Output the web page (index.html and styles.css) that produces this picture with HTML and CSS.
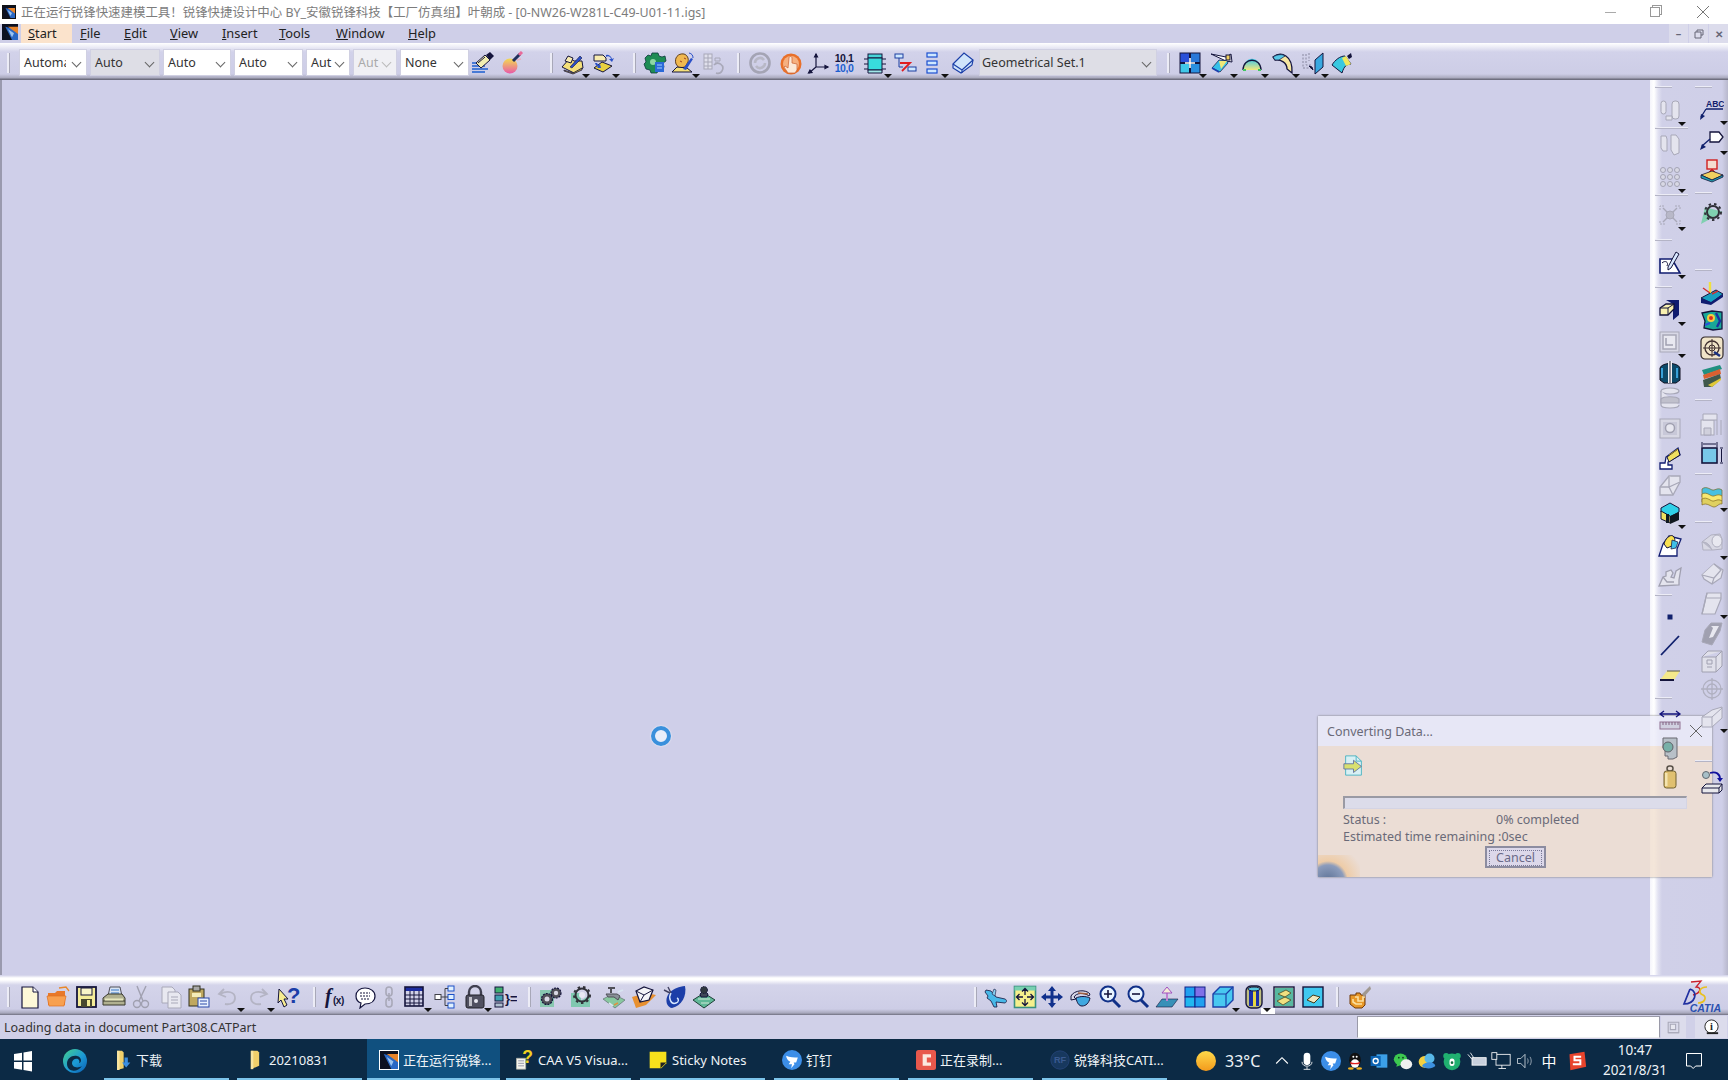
FILE: index.html
```html
<!DOCTYPE html>
<html lang="zh">
<head>
<meta charset="utf-8">
<title>CATIA</title>
<link rel="stylesheet" href="styles.css">
</head>
<body>
<svg class="sprite" xmlns="http://www.w3.org/2000/svg">
<defs>
<linearGradient id="gSun" x1="0" y1="0" x2="0" y2="1"><stop offset="0" stop-color="#ffd94a"/><stop offset="1" stop-color="#f39a1c"/></linearGradient>
<linearGradient id="gEdge" x1="0" y1="0" x2="1" y2="1"><stop offset="0" stop-color="#45d08c"/><stop offset=".55" stop-color="#1c9ad6"/><stop offset="1" stop-color="#0a5bb0"/></linearGradient>
<linearGradient id="gBall" x1="0" y1="0" x2="0" y2="1"><stop offset="0" stop-color="#f2dc50"/><stop offset="1" stop-color="#e85aa8"/></linearGradient>
<linearGradient id="gCyan" x1="0" y1="0" x2="0" y2="1"><stop offset="0" stop-color="#38c8ee"/><stop offset="1" stop-color="#f5e87a"/></linearGradient>

<!-- top toolbar -->
<symbol id="i-brush" viewBox="0 0 24 24"><path d="M1 12h10M1 15h13M1 18h16M1 21h13" stroke="#1c5fd0" stroke-width="1.6" fill="none"/><path d="M5 12l9-8 5 5-9 8z" fill="#f2eeb0" stroke="#14143c"/><path d="M15 4l4-3 4 4-4 4z" fill="#14143c"/><path d="M7 12l7-6" stroke="#14143c"/></symbol>
<symbol id="i-ball" viewBox="0 0 24 24"><circle cx="10" cy="15" r="7.5" fill="url(#gBall)"/><path d="M13 10L20 3" stroke="#20305c" stroke-width="3"/><path d="M19 4l3-3" stroke="#e86a9a" stroke-width="3"/><path d="M17 9l4-1" stroke="#e8b0c0" stroke-width="1.5"/></symbol>
<symbol id="i-sk1" viewBox="0 0 24 24"><path d="M1 16l8-9 4 3 8 0 1 7-9 5z" fill="#f4e07a" stroke="#14143c"/><path d="M4 10l3-5 5 2-2 5z" fill="#f8ecb0" stroke="#14143c"/><path d="M9 16L19 5l2 2-10 10z" fill="#2a50c8" stroke="#14143c" stroke-width=".6"/><path d="M3 19l9 3 9-5v2l-9 4-9-3z" fill="#b8a040" stroke="#14143c" stroke-width=".7"/></symbol>
<symbol id="i-sk2" viewBox="0 0 24 24"><path d="M3 4h9l3 3v3H3z" fill="#f8ecb0" stroke="#14143c"/><path d="M15 4a5 5 0 0 1 6 4l2-1-2 4-3-3 2 0a3 3 0 0 0-5-2z" fill="#2a50c8"/><path d="M3 17l8-6 10 4-9 6z" fill="#e8d040" stroke="#14143c"/><path d="M4 12a5 5 0 0 0 3 4l-1 1 4 0-1-4-1 1a3 3 0 0 1-2-2z" fill="#2a50c8"/></symbol>
<symbol id="i-gearg" viewBox="0 0 24 24"><path d="M9 2h6l1 3 3 1 3-1 1 5-3 2 1 4-2 3-3-1-2 4h-6l-1-3-4-1-2-5 2-2-1-4 3-3 3 1z" fill="#1e8c54" stroke="#0e3a3c" stroke-width=".8"/><circle cx="10" cy="11" r="3" fill="#8fd8a4"/><rect x="12" y="11" width="9" height="10" fill="#2a6ad8"/><path d="M14 14h5M14 17h5" stroke="#a0d0ff"/></symbol>
<symbol id="i-face" viewBox="0 0 24 24"><path d="M5 13c-2-6 2-11 8-10 3 1 5 4 4 8l-3 5-6 1z" fill="#f0b850" stroke="#604020"/><path d="M9 10l2 1M13 7l2 1" stroke="#a04020"/><path d="M1 21l5-5 10 1 5 4z" fill="#f4e07a" stroke="#14143c"/><path d="M12 18L20 7l2 1-7 11z" fill="#2a50c8"/><path d="M18 2a5 5 0 0 1 4 5" stroke="#2a50c8" fill="none"/></symbol>
<symbol id="i-tabled" viewBox="0 0 24 24" fill="none" stroke="#a8a8b8"><rect x="3" y="3" width="8" height="15" fill="#e0e0ec"/><path d="M3 7h8M3 11h8M3 15h8M7 3v15"/><path d="M14 7h5v3h-5zM14 12h3"/><path d="M15 22a5 5 0 1 0-2-8" stroke-width="1.6"/></symbol>
<symbol id="i-swirl" viewBox="0 0 24 24" fill="none" stroke="#a4a4b4" stroke-width="2.6"><circle cx="12" cy="12" r="9.5"/><path d="M7 12a5 5 0 0 1 9-3M17 12a5 5 0 0 1-9 3" stroke="#b8b8c6"/></symbol>
<symbol id="i-hand" viewBox="0 0 24 24"><circle cx="12" cy="13" r="10.5" fill="#e8702a"/><circle cx="12" cy="13" r="8" fill="#f6b080"/><path d="M10 7c0-2 3-2 3 0v5l5 1v6l-2 3H9l-4-6 1-1 3 2z" fill="#fbe8d8" stroke="#c86030" stroke-width=".7"/></symbol>
<symbol id="i-axis" viewBox="0 0 24 24" fill="none" stroke="#14143c" stroke-width="1.2"><path d="M10 3v13l12 0M10 16L3 22"/><path d="M8.500 6L10 3l1.500 3zM19 14.500l3 1.500-3 1.500zM4 19l-1.500 3 3.500-.5z" fill="#14143c"/></symbol>
<symbol id="i-num" viewBox="0 0 24 24"><text x="12" y="10.500" class="numt" fill="#14143c">10,1</text><text x="12" y="21" class="numt" fill="#1c5fd0">10,0</text></symbol>
<symbol id="i-cube" viewBox="0 0 24 24"><rect x="5" y="3" width="14" height="4" fill="#48d4d8" stroke="#14143c"/><rect x="5" y="7" width="14" height="12" fill="#38dcdc" stroke="#14143c"/><path d="M5 19l14 0v3H5z" fill="#a0e8e8" stroke="#14143c"/><path d="M1 8h4M1 13h4M1 18h4M19 8h4M19 13h4M19 18h4" stroke="#14143c"/></symbol>
<symbol id="i-skr" viewBox="0 0 24 24"><rect x="2" y="3" width="8" height="4" fill="#cfe8ff" stroke="#1c3fa0"/><path d="M6 7v9h4" stroke="#1c3fa0" fill="none"/><rect x="15" y="16" width="8" height="4" fill="#cfe8ff" stroke="#1c3fa0"/><path d="M7 12h10l-8 8" stroke="#e01c20" stroke-width="1.800" fill="none"/></symbol>
<symbol id="i-list" viewBox="0 0 24 24" fill="#cfe8ff" stroke="#1c4fd0" stroke-width="1.2"><rect x="7" y="2" width="10" height="4"/><rect x="7" y="10" width="10" height="4"/><rect x="7" y="18" width="10" height="4"/></symbol>
<symbol id="i-plane" viewBox="0 0 24 24"><path d="M2 13L13 2l9 7-1 5-11 8-8-5z" fill="#cfe4fb" stroke="#1a3ea8" stroke-width="1.200"/><path d="M2 13l9 6L22 9M11 19v3" stroke="#1a3ea8" fill="none" stroke-width="1.200"/></symbol>
<symbol id="i-grid4" viewBox="0 0 24 24"><rect x="2" y="2" width="9.500" height="9.500" fill="#2a50d8" stroke="#14143c"/><rect x="12.500" y="2" width="9.500" height="9.500" fill="#2a78d8" stroke="#14143c"/><rect x="2" y="12.500" width="9.500" height="9.500" fill="#40c8e8" stroke="#14143c"/><rect x="12.500" y="12.500" width="9.500" height="9.500" fill="#2a90e0" stroke="#14143c"/><path d="M12 7v10M7 12h10" stroke="#fff" stroke-width="1.600"/></symbol>
<symbol id="i-surf1" viewBox="0 0 24 24"><path d="M2 3l15 3 5-3 1 8-6-1z" fill="#fff" stroke="#14143c"/><rect x="17" y="4" width="4" height="5" fill="#f0d060" stroke="#14143c"/><path d="M3 17l7-8 8 1 1 2-8 9z" fill="#38c0e8" stroke="#14143c" stroke-width=".7"/><path d="M10 10l8 0-6 8z" fill="#f0e878"/><path d="M3 17l7 4" stroke="#1c40b0" stroke-width="1.500"/></symbol>
<symbol id="i-arc" viewBox="0 0 24 24"><path d="M3 19c0-15 18-15 18 0z" fill="url(#gCyan)"/><path d="M3 19C3 6 21 6 21 19" stroke="#14143c" fill="none" stroke-width="1.300"/><path d="M3 19h3M18 19h3" stroke="#40c860" stroke-width="2"/></symbol>
<symbol id="i-cres" viewBox="0 0 24 24"><path d="M2 6C10 0 22 4 21 22L16 18C16 12 10 8 4 9z" fill="#f6e6a0" stroke="#14143c" stroke-width="1.300"/><path d="M2 6c5-3 9-3 12-1l-6 4-4 0z" fill="#58c8e8" stroke="#14143c" stroke-width=".7"/></symbol>
<symbol id="i-proj" viewBox="0 0 24 24"><path d="M15 9l8-7v14l-8 7z" fill="#38a8e0" stroke="#14143c"/><path d="M3 3v14h8" stroke="#8888a0" stroke-dasharray="2 1.500" fill="none"/><path d="M6 3v11h6M9 2v8" stroke="#8888a0" stroke-dasharray="2 1.500" fill="none"/><path d="M9 15l4 4-1-3-3-1z" fill="#14143c" stroke="#14143c"/></symbol>
<symbol id="i-surf2" viewBox="0 0 24 24"><path d="M2 14C5 9 10 5 15 5l6 8c-4 0-7 2-9 9z" fill="#38c8e0" stroke="#14143c"/><path d="M12 7l4-2 5 8-5 2z" fill="#f0e860"/><path d="M17 5l4-3 1 4-3 2z" fill="#14143c"/></symbol>

<!-- bottom toolbar -->
<symbol id="i-new" viewBox="0 0 24 24"><path d="M4 2h11l5 5v16H4z" fill="#fdf8d8" stroke="#14143c" stroke-width="1.200"/><path d="M15 2v5h5" fill="#fff" stroke="#14143c"/></symbol>
<symbol id="i-open" viewBox="0 0 24 24"><path d="M2 8h7l2-2h8v14H2z" fill="#e8782a"/><path d="M1 11h19l-2 10H3z" fill="#f8a050" stroke="#e07020" stroke-width=".7"/><path d="M13 3l7-1 3 4" fill="none" stroke="#e8882a" stroke-width="1.300"/></symbol>
<symbol id="i-save" viewBox="0 0 24 24"><rect x="3" y="2" width="19" height="20" fill="#f4ec98" stroke="#14143c" stroke-width="1.800"/><rect x="7" y="3" width="11" height="7" fill="#f8f4c8" stroke="#14143c"/><rect x="7" y="14" width="11" height="8" fill="#484830"/><rect x="13" y="15" width="3" height="6" fill="#f4ec98"/></symbol>
<symbol id="i-print" viewBox="0 0 24 24"><path d="M8 2h10l2 9H6z" fill="#d8e4f4" stroke="#505058"/><path d="M9 5h8M9 8h8" stroke="#3878c8"/><path d="M1 13l5-4h14l3 4v7H1z" fill="#b0b090" stroke="#38382c"/><path d="M1 16h22" stroke="#38382c"/><rect x="3" y="13.500" width="18" height="2" fill="#e8e8c0"/></symbol>
<symbol id="i-cut" viewBox="0 0 24 24" fill="none" stroke="#a0a0b0" stroke-width="1.400"><path d="M8 1l6 15M17 1l-7 15"/><circle cx="8" cy="19" r="3.500"/><circle cx="16" cy="19" r="3.500"/></symbol>
<symbol id="i-copy" viewBox="0 0 24 24" fill="#e8e8f0" stroke="#a8a8b8"><path d="M3 2h10l3 3v13H3z"/><path d="M9 7h10l3 3v13H9z"/><path d="M12 12h7M12 15h7M12 18h7"/></symbol>
<symbol id="i-paste" viewBox="0 0 24 24"><rect x="2" y="4" width="15" height="17" fill="#c0a860" stroke="#303020"/><rect x="6" y="1" width="7" height="5" fill="#a8a8a8" stroke="#303020"/><path d="M5 8h9v4H5z" fill="#f4ecb8"/><rect x="11" y="13" width="11" height="9" fill="#e8f0ff" stroke="#2848a8"/><path d="M13 16h7M13 19h7" stroke="#2848a8"/></symbol>
<symbol id="i-undo" viewBox="0 0 24 24" fill="none" stroke="#b4b4c4" stroke-width="1.800"><path d="M8 4L3 9l7 3M4 9c8-4 15-2 15 4 0 5-5 7-10 6"/></symbol>
<symbol id="i-redo" viewBox="0 0 24 24" fill="none" stroke="#b4b4c4" stroke-width="1.800"><path d="M16 4l5 5-7 3M20 9C12 5 5 7 5 13c0 5 5 7 10 6"/></symbol>
<symbol id="i-help" viewBox="0 0 24 24"><path d="M2 4l9 10-4 0 3 6-3 2-3-7-3 3z" fill="#f6ec90" stroke="#14143c"/><text x="10" y="18" class="helpt" fill="#1c3ea8">?</text></symbol>
<symbol id="i-fx" viewBox="0 0 24 24"><text x="1" y="18" class="fxt" fill="#14143c">f</text><text x="9" y="19" class="fxs" fill="#14143c">(x)</text></symbol>
<symbol id="i-chat" viewBox="0 0 24 24"><path d="M3 11C3 6 7 3 12 3s10 3 10 8-4 8-10 8l-5 4 1-5c-3-1-5-4-5-7z" fill="#fff" stroke="#14143c" stroke-width="1.200"/><path d="M7 8h10M7 11h10M8 14h8" stroke="#14143c" stroke-dasharray="2 1"/></symbol>
<symbol id="i-link" viewBox="0 0 24 24" fill="none" stroke="#a8a8b8" stroke-width="1.600"><rect x="9" y="2" width="6" height="9" rx="3"/><rect x="9" y="13" width="6" height="9" rx="3"/><path d="M12 8v8"/></symbol>
<symbol id="i-table" viewBox="0 0 24 24"><rect x="2" y="2" width="18" height="4" fill="#1c2ca0"/><rect x="2" y="2" width="18" height="19" fill="none" stroke="#14143c" stroke-width="1.600"/><path d="M2 10h18M2 14h18M2 18h18M7 6v15M11 6v15M16 6v15" stroke="#14143c"/></symbol>
<symbol id="i-tree" viewBox="0 0 24 24" fill="#dff0ff" stroke="#1c50c8"><rect x="15" y="1" width="6" height="5"/><rect x="15" y="9.500" width="6" height="5"/><rect x="15" y="18" width="6" height="5"/><rect x="2" y="9.500" width="6" height="5" stroke="#404048" fill="#fff"/><path d="M8 12h7M12 12V3.500h3M12 12v8.500h3" fill="none" stroke="#404048"/></symbol>
<symbol id="i-lock" viewBox="0 0 24 24"><path d="M6 11V7a6 6 0 0 1 12 0v4" fill="none" stroke="#404050" stroke-width="2.400"/><rect x="3" y="10" width="18" height="13" rx="2" fill="#505060" stroke="#202028"/><path d="M6 12h3v9H6z" fill="#c0c0c8"/><circle cx="13" cy="16" r="2" fill="#e8e8f0"/></symbol>
<symbol id="i-par" viewBox="0 0 24 24"><rect x="2" y="2" width="8" height="6" fill="#40b070" stroke="#14143c"/><rect x="2" y="10" width="8" height="6" fill="#40a0b0" stroke="#14143c"/><rect x="2" y="18" width="8" height="4" fill="#b0c0d0" stroke="#14143c"/><text x="12" y="18" class="part" fill="#14143c">}=</text></symbol>
<symbol id="i-gears" viewBox="0 0 24 24"><rect x="1" y="5" width="14" height="17" fill="#88c8b0"/><circle cx="8" cy="14" r="5.500" fill="#505058" stroke="#14143c" stroke-width="1.200" stroke-dasharray="2 1"/><circle cx="8" cy="14" r="2.500" fill="#d8d8e4"/><circle cx="17" cy="8" r="5" fill="#505058" stroke="#14143c" stroke-width="1.200" stroke-dasharray="2 1"/><circle cx="17" cy="8" r="2.200" fill="#d8d8e4"/></symbol>
<symbol id="i-gear" viewBox="0 0 24 24"><path d="M1 22L20 22 20 10z" fill="#80c8b0"/><path d="M1 8h10v14H1z" fill="#80c8b0"/><circle cx="12" cy="10" r="6.500" fill="none" stroke="#303038" stroke-width="2"/><circle cx="12" cy="10" r="8" fill="none" stroke="#303038" stroke-width="2" stroke-dasharray="2.500 3"/><circle cx="12" cy="10" r="3" fill="#e8e8f4"/></symbol>
<symbol id="i-tap" viewBox="0 0 24 24"><path d="M1 14l10-5 12 6-10 8z" fill="#88c8a0" stroke="#607070" stroke-width=".7"/><path d="M4 9h11l3 2-2 4-4-3H6z" fill="#8a9098" stroke="#505058"/><path d="M9 8V3M6 3h7" stroke="#505058" stroke-width="2"/><path d="M16 7l5-2M7 18l4 3" stroke="#d8e4f0" stroke-width="1.600"/><path d="M12 20l4-2" stroke="#e09040" stroke-width="1.400"/></symbol>
<symbol id="i-book" viewBox="0 0 24 24"><path d="M0 12l4 11 10-3 10-10-10-2z" fill="#e89030"/><path d="M4 6l8-4 9 3-4 10-9 2z" fill="#f4f4f8" stroke="#14143c" stroke-width="1.200"/><path d="M4 6l8 4 9-5M12 10l-4 7" fill="none" stroke="#14143c"/></symbol>
<symbol id="i-stet" viewBox="0 0 24 24"><path d="M4 19C1 10 10 2 22 1c2 9-3 20-13 22-2 0-4-2-5-4z" fill="#1c3ea8"/><path d="M1 5l6 3M5 2l3 6" stroke="#404060" stroke-width="1.400"/><path d="M8 8c-3 5 0 12 5 10 3-1 3-4 1-5" fill="none" stroke="#d8e8ff" stroke-width="1.400"/></symbol>
<symbol id="i-wb" viewBox="0 0 24 24"><path d="M1 15L12 8l11 7-11 8z" fill="#60b898" stroke="#204038"/><path d="M6 14h12M9 18h8" stroke="#d0e8d8"/><path d="M8 9a5 5 0 0 1 8 0l-1 3H9z" fill="#404858" stroke="#14143c"/><circle cx="12" cy="5" r="3.500" fill="#303840" stroke="#14143c" stroke-dasharray="1.500 1"/></symbol>
<symbol id="i-air" viewBox="0 0 24 24"><path d="M2 5l5 1 5 6 9 2c2 1 2 3 0 4l-9-1 1 5-3 0-3-6-4-3 1-2-3-4z" fill="#48b8e8" stroke="#14143c" stroke-width=".8"/><path d="M8 9l2-5 2 1-1 6z" fill="#88d0f0" stroke="#14143c" stroke-width=".6"/></symbol>
<symbol id="i-fit" viewBox="0 0 24 24"><rect x="1.500" y="1.500" width="21" height="21" fill="#f6f08c" stroke="#3a9080" stroke-width="1.600"/><rect x="1.500" y="1.500" width="21" height="4" fill="#78d0b0"/><path d="M12 4v6M9 6.500l3-3 3 3M12 20v-6M9 17.500l3 3 3-3M4 12h6M6.500 9l-3 3 3 3M20 12h-6M17.500 9l3 3-3 3" stroke="#14143c" fill="none" stroke-width="1.300"/></symbol>
<symbol id="i-pan" viewBox="0 0 24 24"><path d="M12 1l4 5h-2.500v4.500H18V8l5 4-5 4v-2.500h-4.500V18H16l-4 5-4-5h2.500v-4.500H6V16l-5-4 5-4v2.500h4.500V6H8z" fill="#10308c"/></symbol>
<symbol id="i-rot" viewBox="0 0 24 24"><path d="M2 11c3-6 15-7 19-2l-1 2C15 7 7 8 5 12l2 2-5 1z" fill="#d8d8e8" stroke="#14143c"/><path d="M7 13c4-2 10-2 14 0-1 5-4 8-8 8-3 0-5-3-6-8z" fill="#40a8e0" stroke="#14143c"/><path d="M9 8l10 1" stroke="#a06040" stroke-width="1.500"/></symbol>
<symbol id="i-zin" viewBox="0 0 24 24" fill="none"><circle cx="10" cy="9" r="7.500" fill="#e8f4ff" stroke="#103088" stroke-width="2"/><path d="M6 9h8M10 5v8" stroke="#14143c" stroke-width="1.600"/><path d="M15 15l7 7" stroke="#103088" stroke-width="3"/></symbol>
<symbol id="i-zout" viewBox="0 0 24 24" fill="none"><circle cx="10" cy="9" r="7.500" fill="#e8f4ff" stroke="#103088" stroke-width="2"/><path d="M6 9h8" stroke="#14143c" stroke-width="1.600"/><path d="M15 15l7 7" stroke="#103088" stroke-width="3"/></symbol>
<symbol id="i-normal" viewBox="0 0 24 24"><path d="M1 22l6-8h16l-6 8z" fill="#3890b8" stroke="#14143c" stroke-width=".6"/><path d="M12 16V5" stroke="#c080d0" stroke-width="2"/><path d="M7 8l5-6 5 6z" fill="#f4ecd8" stroke="#a050c0"/></symbol>
<symbol id="i-views" viewBox="0 0 24 24"><rect x="2" y="2" width="10" height="10" fill="#20a0f0" stroke="#102088"/><rect x="12" y="2" width="10" height="10" fill="#8070e8" stroke="#102088"/><rect x="2" y="12" width="10" height="10" fill="#20b8f0" stroke="#102088"/><rect x="12" y="12" width="10" height="10" fill="#20a0f0" stroke="#102088"/></symbol>
<symbol id="i-box" viewBox="0 0 24 24"><path d="M2 9L9 2h13v13l-7 7H2z" fill="#48c8f0" stroke="#1c40a8" stroke-width="1.400"/><path d="M2 9h13v13M15 9l7-7" fill="none" stroke="#1c40a8" stroke-width="1.200"/></symbol>
<symbol id="i-cyl" viewBox="0 0 24 24"><rect x="4" y="1" width="16" height="22" rx="5" fill="#c0c080" stroke="#14143c" stroke-width="1.400"/><rect x="7" y="5" width="10" height="16" fill="#1c30a8"/><rect x="11" y="5" width="3" height="16" fill="#e8d840"/><ellipse cx="12" cy="4" rx="6" ry="2" fill="#58c8e0" stroke="#14143c"/></symbol>
<symbol id="i-shot1" viewBox="0 0 24 24"><rect x="2" y="2" width="20" height="20" fill="#f0f0d8" stroke="#14143c" stroke-width="1.400"/><rect x="3" y="3" width="18" height="18" fill="#58b8a0"/><path d="M6 9l8-4 5 3-6 4zM5 16l8-4 6 3-8 5z" fill="#f0e080" stroke="#403818" stroke-width=".7"/></symbol>
<symbol id="i-shot2" viewBox="0 0 24 24"><rect x="2" y="2" width="20" height="20" fill="#40c8f0" stroke="#14143c" stroke-width="1.400"/><path d="M6 15l6-5 7 2-6 6z" fill="#f0e8c0" stroke="#403818"/></symbol>
<symbol id="i-ctl" viewBox="0 0 24 24"><path d="M2 10h6v-2h4l1 2h4v10l-3 3H7l-5-4z" fill="#e89828" stroke="#703808"/><path d="M7 12h3v4h5v-4h2M5 14v3l3 2h6" fill="none" stroke="#fbe0a0" stroke-width="1.600"/><path d="M14 9l8-8 1 3-7 8z" fill="#a09890"/></symbol>

<!-- right bar, column 1 -->
<symbol id="i-d1" viewBox="0 0 24 24" fill="#e4e4ee" stroke="#a8a8b8"><rect x="3" y="3" width="5" height="13" rx="2.500"/><rect x="14" y="3" width="7" height="18" rx="3"/><path d="M8 18h6v4H8z"/></symbol>
<symbol id="i-d2" viewBox="0 0 24 24" fill="#e4e4ee" stroke="#a8a8b8"><path d="M3 3h5l1 3v12H5L3 15z"/><path d="M13 2h5l3 4v14l-5 2-3-5z"/></symbol>
<symbol id="i-d3" viewBox="0 0 24 24" fill="#d8d8e4" stroke="#a4a4b4"><circle cx="5" cy="5" r="2.500"/><circle cx="12" cy="5" r="2.500"/><circle cx="19" cy="5" r="2.500"/><circle cx="5" cy="12" r="2.500"/><circle cx="12" cy="12" r="2.500"/><circle cx="19" cy="12" r="2.500"/><circle cx="5" cy="19" r="2.500"/><circle cx="12" cy="19" r="2.500"/><circle cx="19" cy="19" r="2.500"/></symbol>
<symbol id="i-d4" viewBox="0 0 24 24" fill="none" stroke="#a8a8b8"><path d="M2 7V3h5M17 3h5v4M22 17v4h-5M7 21H2v-4" stroke-dasharray="2 1"/><path d="M5 5l14 14M19 5L5 19" stroke-width="1.400"/><circle cx="12" cy="12" r="4" fill="#b8b8c8"/></symbol>
<symbol id="i-sketch" viewBox="0 0 24 24"><path d="M2 8h12l8 14H2z" fill="#fff" stroke="#101c70" stroke-width="1.600"/><path d="M10 16L18 1l3 2-8 14-3 2z" fill="#d8e8ff" stroke="#14143c"/><path d="M4 12c3-3 7-1 5 3" fill="none" stroke="#14143c"/></symbol>
<symbol id="i-pad" viewBox="0 0 24 24"><path d="M8 2h13v15l-6 5V6z" fill="#101c70"/><path d="M2 10l6-4h8v5l-6 6H2z" fill="#f8f0b0" stroke="#14143c" stroke-width="1.300"/><path d="M2 10h8l6-4M10 10v7" fill="none" stroke="#14143c"/></symbol>
<symbol id="i-d5" viewBox="0 0 24 24"><rect x="2" y="2" width="19" height="20" fill="#d8d8e6" stroke="#a8a8b8"/><rect x="5" y="5" width="13" height="14" fill="#e8e8f0" stroke="#a8a8b8" stroke-width="1.500"/><path d="M8 8v7h7" fill="none" stroke="#a0a0b0" stroke-width="1.500"/></symbol>
<symbol id="i-coil" viewBox="0 0 24 24"><path d="M2 8c2-6 18-6 20 0v12l-4 3H6l-4-3z" fill="#0c4868" stroke="#101020"/><rect x="10" y="1" width="4" height="22" fill="#f0f0f4"/><path d="M4 8v10M19 8v10" stroke="#38a0d8" stroke-width="2"/><path d="M12 1v22" stroke="#202030"/></symbol>
<symbol id="i-d6" viewBox="0 0 24 24" fill="#e4e4ee" stroke="#a8a8b8" stroke-width="1.200"><ellipse cx="12" cy="5" rx="9" ry="3"/><path d="M3 5v14c0 2 4 3 9 3s9-1 9-3"/><path d="M3 13c3-3 15-3 18 0v4H3z" fill="#c0c0cc"/></symbol>
<symbol id="i-d7" viewBox="0 0 24 24"><rect x="2" y="3" width="20" height="19" fill="#d8d8e4" stroke="#a8a8b8"/><rect x="5" y="6" width="14" height="13" fill="#c8c8d8"/><circle cx="12" cy="12" r="4.500" fill="#e8e8f0" stroke="#a0a0b0" stroke-width="1.500"/></symbol>
<symbol id="i-rib" viewBox="0 0 24 24"><path d="M2 23v-6h5l1-6 12-9 2 7-12 7v3h4v4z" fill="#fff" stroke="#101c70" stroke-width="1.300"/><path d="M9 11l11-8 2 6-11 7z" fill="#f0e060" stroke="#14143c"/><path d="M11 9l9-6" stroke="#a89020"/></symbol>
<symbol id="i-d8" viewBox="0 0 24 24" fill="#e4e4ee" stroke="#a8a8b8" stroke-width="1.300"><path d="M2 22v-8l9-11h11v6L15 22z"/><path d="M2 14h9l4 8M11 3l0 11 11-5"/></symbol>
<symbol id="i-hexc" viewBox="0 0 24 24"><path d="M12 2l9 5v4l-9 5-9-5V7z" fill="#30d0e8" stroke="#14143c"/><path d="M3 10v8l9 4V15z" fill="#f0e060" stroke="#14143c"/><path d="M12 15l9-4v8l-9 4z" fill="#101820"/><rect x="8" y="13" width="3" height="9" fill="#101820"/></symbol>
<symbol id="i-rem" viewBox="0 0 24 24"><path d="M1 23l4-12 6-8 12 3-4 10v7z" fill="#fff" stroke="#101c70" stroke-width="1.300"/><path d="M6 11C7 6 12 1 15 3c3 2 2 8-1 10l-5 2z" fill="#f8e050" stroke="#14143c"/><path d="M14 7l6 2-2 6-5 1z" fill="#40c0e8" stroke="#14143c" stroke-width=".7"/></symbol>
<symbol id="i-d9" viewBox="0 0 24 24" fill="#e4e4ee" stroke="#a0a0b0" stroke-width="1.300"><path d="M1 23l4-9 3-1V9l5-2 2 3-2 4 3 1 2-7 5-3-2 12v5z"/><path d="M5 14l4 5h7"/></symbol>
<symbol id="i-dot" viewBox="0 0 24 24"><rect x="9.500" y="9.500" width="5" height="5" fill="#10206c"/></symbol>
<symbol id="i-line" viewBox="0 0 24 24"><path d="M3 22L21 3" stroke="#10206c" stroke-width="1.800"/></symbol>
<symbol id="i-para" viewBox="0 0 24 24"><path d="M2 17L9 8h13l-6 9z" fill="#f4e88a" stroke="none"/><path d="M2 17h14" stroke="#14143c" stroke-width="2"/><path d="M9 8h13" stroke="#585848"/></symbol>
<symbol id="i-ruler" viewBox="0 0 24 24"><path d="M3 6h18M6 3L2 6l4 3M18 3l4 3-4 3" fill="none" stroke="#14147c" stroke-width="1.300"/><rect x="2" y="14" width="20" height="7" fill="#d0d0e0" stroke="#907090"/><path d="M5 14v3M8 14v3M11 14v3M14 14v3M17 14v3M20 14v3" stroke="#806080"/></symbol>
<symbol id="i-cal" viewBox="0 0 24 24"><path d="M5 2h14v19l-4 2h-5v-3H7V14l-2-2z" fill="#b8c0c8" stroke="#686870"/><circle cx="10" cy="11" r="5" fill="#78b0a8" stroke="#606068"/></symbol>
<symbol id="i-weight" viewBox="0 0 24 24"><rect x="9" y="1" width="6" height="5" rx="2.500" fill="none" stroke="#585048" stroke-width="1.500"/><rect x="6" y="6" width="12" height="17" rx="2.500" fill="#e0c070" stroke="#706030"/><rect x="7" y="8" width="2.500" height="13" fill="#f4e4b0"/></symbol>

<!-- right bar, column 2 -->
<symbol id="i-abc" viewBox="0 0 24 24"><text x="6" y="10" class="abct" fill="#10206c">ABC</text><path d="M6 12h17M6 12L1 20" stroke="#10206c" fill="none" stroke-width="1.300"/><path d="M0 23l1-6 4 2z" fill="#10206c"/></symbol>
<symbol id="i-flag" viewBox="0 0 24 24"><path d="M10 5h9l4 5-4 5h-9z" fill="#fff" stroke="#14143c" stroke-width="1.300"/><path d="M10 12l-8 7" stroke="#10206c" stroke-width="1.300"/><path d="M0 23l2-6 4 3z" fill="#10206c"/></symbol>
<symbol id="i-stamp" viewBox="0 0 24 24"><rect x="7" y="1" width="10" height="9" fill="#f4dcd0" stroke="#d02020" stroke-width="1.400"/><path d="M12 10v4M8 14l4-4 4 4z" fill="#e03020" stroke="#d02020"/><path d="M1 16l11-4 11 4-11 5z" fill="#f0d060" stroke="#14143c" stroke-width=".8"/><path d="M1 16v3l11 4 11-5v-2l-11 5z" fill="#20a0b0" stroke="#14143c" stroke-width=".8"/></symbol>
<symbol id="i-tgear" viewBox="0 0 24 24"><path d="M1 22L23 10 5 5z" fill="#80d0b0"/><circle cx="13" cy="10" r="6" fill="none" stroke="#303038" stroke-width="2"/><circle cx="13" cy="10" r="8" fill="none" stroke="#303038" stroke-width="2" stroke-dasharray="2.500 3"/></symbol>
<symbol id="i-boxr" viewBox="0 0 24 24"><path d="M1 17L16 9l7 4-12 9z" fill="#18a0c0" stroke="#14143c"/><path d="M1 17v5l10 2 12-8v-3l-12 8z" fill="#101c70"/><path d="M10 12V1" stroke="#f0e040" stroke-width="2.400"/><path d="M10 12L3 7" stroke="#d03030" stroke-width="1.400"/><path d="M12 13l6-3" stroke="#d03030" stroke-width="1.400"/></symbol>
<symbol id="i-fem" viewBox="0 0 24 24"><path d="M2 5l10-2 10 1v17l-9 1-9-2 1-7z" fill="#18a898" stroke="#14143c" stroke-width="1.300"/><ellipse cx="11" cy="10" rx="4" ry="4" fill="#f0d040"/><circle cx="11" cy="10" r="2" fill="#d82c20"/><path d="M16 5l4 8-3 6" stroke="#1c30a0" stroke-width="2.400" fill="none"/><path d="M5 17l5-2" stroke="#2850d8" stroke-width="2"/></symbol>
<symbol id="i-target" viewBox="0 0 24 24"><rect x="1" y="1" width="22" height="22" rx="4" fill="#f0e4c8" stroke="#302828" stroke-width="1.200"/><circle cx="12" cy="12" r="7" fill="none" stroke="#403030" stroke-width="1.300"/><circle cx="12" cy="12" r="3" fill="none" stroke="#403030"/><path d="M3 12h18M12 3v18" stroke="#403030"/><path d="M14 16l6 4" stroke="#183080" stroke-width="2.400"/></symbol>
<symbol id="i-stack" viewBox="0 0 24 24"><path d="M2 6l18-5 2 4-18 6z" fill="#209080"/><path d="M3 11l17-6 1 5-17 5z" fill="#d86030"/><path d="M3 16l17-6 1 5-9 8H4z" fill="#40584c"/><path d="M8 21l13-7v2l-9 7z" fill="#e0c838"/></symbol>
<symbol id="i-d10" viewBox="0 0 24 24" fill="#e4e4ee" stroke="#a8a8b8"><rect x="1" y="8" width="13" height="15"/><path d="M3 2h14v6H3zM17 8l0 15M21 8v15"/><path d="M4 16h7v7H4z" fill="#d0d0dc"/></symbol>
<symbol id="i-dim" viewBox="0 0 24 24"><rect x="2" y="7" width="15" height="15" fill="#78c8e8" stroke="#14143c" stroke-width="1.600"/><path d="M2 1v5M17 1v5M3 3h13" stroke="#14143c"/><path d="M20 7h3M20 22h3M21.500 8v13" stroke="#14143c"/></symbol>
<symbol id="i-layers" viewBox="0 0 24 24"><path d="M2 5c5-4 9 2 12 1s5-2 8 0v6c-3-1-5 1-8 1s-7-4-12 0z" fill="#48c0e0" stroke="#806820" stroke-width=".7"/><path d="M2 10c5-3 9 3 12 2s5-2 8 0v5c-3-1-5 1-8 1s-7-4-12 0z" fill="#f8e870" stroke="#806820" stroke-width=".7"/><path d="M2 15c5-3 9 3 12 2s5-2 8 0v3c-3-1-5 3-8 3s-7-5-12-2z" fill="#e0d060" stroke="#806820" stroke-width=".7"/></symbol>
<symbol id="i-d11" viewBox="0 0 24 24" fill="#d8d8e4" stroke="#b0b0c0"><path d="M2 10l9-7 9-1 2 5v10l-9 1H3z"/><path d="M2 10c5 0 7 2 10 8" fill="#b8b8c8"/><ellipse cx="17" cy="9" rx="5" ry="6" fill="#e8e8f0"/></symbol>
<symbol id="i-d12" viewBox="0 0 24 24" fill="#e4e4ee" stroke="#a8a8b8" stroke-width="1.200"><path d="M2 13L14 2l9 6-2 8-9 6-8-5z"/><path d="M2 13l12 3 7-8-7-6M14 16l-2 6"/></symbol>
<symbol id="i-d13" viewBox="0 0 24 24" fill="#e4e4ee" stroke="#a8a8b8" stroke-width="1.200"><path d="M7 2h14v6l-6 15H2z"/><path d="M7 2L2 23M7 7h14"/></symbol>
<symbol id="i-d14" viewBox="0 0 24 24"><path d="M5 8L11 1h11l-2 8-8 14-10-3z" fill="#a0a0b0" stroke="#a8a8b8"/><path d="M11 4h8l-6 11-4 1 4-10z" fill="#e8e8f0"/></symbol>
<symbol id="i-d15" viewBox="0 0 24 24" fill="#e0e0ea" stroke="#a0a0b0"><path d="M2 8h14l6-6v15l-6 6H2z"/><path d="M2 8l6-6h14M16 8v15"/><path d="M7 11h5v4H7zM7 18h5"/></symbol>
<symbol id="i-d16" viewBox="0 0 24 24" fill="none" stroke="#b0b0c0" stroke-width="1.300"><circle cx="12" cy="12" r="9"/><circle cx="12" cy="12" r="5"/><path d="M1 12h22M12 1v22"/></symbol>
<symbol id="i-d17" viewBox="0 0 24 24" fill="#e4e4ee" stroke="#a8a8b8"><path d="M2 12L12 5l10-3v11l-10 9H2z"/><path d="M2 12h10v10M12 12l10-9"/></symbol>
<symbol id="i-rev" viewBox="0 0 24 24"><circle cx="6" cy="5" r="3.500" fill="#a8c0c8" stroke="#606870"/><path d="M10 3c6-2 10 1 10 6" fill="none" stroke="#10109c" stroke-width="1.800"/><path d="M17 8h6l-3 4z" fill="#10109c"/><path d="M2 18l4-4h16v6l-3 3H2z" fill="#e8e8ec" stroke="#14143c"/><path d="M2 18h17v5M19 18l3-4" fill="none" stroke="#14143c"/></symbol>

<!-- dialog and logos -->
<symbol id="i-conv" viewBox="0 0 24 24"><path d="M3 1h12l6 6v16H3z" fill="#d8f0f4" stroke="#40b0c0"/><path d="M15 1v6h6" fill="none" stroke="#40b0c0"/><path d="M1 10h11V6l9 7-9 7v-4H1z" fill="#d8e070" stroke="#6070a0"/></symbol>
<symbol id="i-catia" viewBox="0 0 24 24"><rect width="24" height="24" fill="#0c1020"/><path d="M5 4L24 9v15H15z" fill="#2a68c4"/><path d="M9 4h15v11z" fill="#e8842a"/><path d="M9 8l9 6-3 6z" fill="#9cc4f0"/></symbol>

<!-- taskbar -->
<symbol id="t-win" viewBox="0 0 24 24" fill="#fff"><path d="M3 5l8-1.300v7.800H3zM12.500 3.500L21 2v9.500h-8.500zM3 13h8v7.800L3 19.500zM12.500 13H21v9.500l-8.500-1.500z"/></symbol>
<symbol id="t-edge" viewBox="0 0 24 24"><circle cx="12" cy="12" r="12" fill="url(#gEdge)"/><path d="M4 15c0-6 5-9 10-8 5 1 5 7 2 7H9c0 4 5 6 10 3-3 5-10 6-13 3-1-1-2-3-2-5z" fill="#0c2a45"/><path d="M9 14c0-3 3-5 6-4 1 .500 2 3 1 4z" fill="#1c9ad6"/></symbol>
<symbol id="t-folderd" viewBox="0 0 24 24"><path d="M6 1h6l2 2v19l-8 2z" fill="#f0cf6a"/><path d="M6 1h3v23H6z" fill="#f8e4a0"/><path d="M15 9h4v6h3l-5 6-5-6h3z" fill="#3c8ee0"/></symbol>
<symbol id="t-folder" viewBox="0 0 24 24"><path d="M7 1h8l2 2v16l-10 4z" fill="#f0cf6a"/><path d="M7 1h3v22H7z" fill="#f8e4a0"/></symbol>
<symbol id="t-help" viewBox="0 0 24 24"><path d="M3 10h11v13H3z" fill="#f4f4ec" stroke="#b0b0a8"/><path d="M5 13h7M5 16h7M5 19h7" stroke="#8888a0"/><text x="10" y="16" class="qmark" fill="#f0d020">?</text></symbol>
<symbol id="t-sticky" viewBox="0 0 24 24"><path d="M2 2h20v14l-6 6H2z" fill="#f6e01c"/><path d="M15 22v-7h7z" fill="#222"/></symbol>
<symbol id="t-ding" viewBox="0 0 24 24"><circle cx="12" cy="12" r="12" fill="#3c8ee8"/><path d="M5 7c4 2 10 2 14 2l-2 6h-3l1 2-4 5 1-5H8l2-3c-3-1-5-4-5-7z" fill="#fff"/></symbol>
<symbol id="t-cam" viewBox="0 0 24 24"><rect width="24" height="24" rx="3" fill="#e8584c"/><path d="M18 5H8v14h10v-4h-5V9h5z" fill="#fbe8e0"/></symbol>
<symbol id="t-rf" viewBox="0 0 24 24"><circle cx="12" cy="12" r="11" fill="#17385e" stroke="#26447a"/><text x="12" y="16" class="rft" fill="#3a5a90">RF</text></symbol>
<symbol id="t-sun" viewBox="0 0 24 24"><circle cx="12" cy="12" r="10" fill="url(#gSun)"/></symbol>
<symbol id="t-chev" viewBox="0 0 24 24"><path d="M5 15l7-7 7 7" fill="none" stroke="#fff" stroke-width="1.300"/></symbol>
<symbol id="t-mic" viewBox="0 0 24 24"><rect x="8" y="2" width="8" height="15" rx="4" fill="#fff"/><path d="M6 13c0 7 12 7 12 0M12 19v3M8 22h8" fill="none" stroke="#fff"/></symbol>
<symbol id="t-qq" viewBox="0 0 24 24"><ellipse cx="12" cy="11" rx="7" ry="9" fill="#111"/><ellipse cx="12" cy="15" rx="5" ry="5" fill="#fff"/><path d="M6 13c4 2 8 2 12 0l-1 3H7z" fill="#e02020"/><ellipse cx="7" cy="21" rx="3.500" ry="1.500" fill="#f0b020"/><ellipse cx="17" cy="21" rx="3.500" ry="1.500" fill="#f0b020"/><circle cx="10" cy="7" r="1.200" fill="#fff"/><circle cx="14" cy="7" r="1.200" fill="#fff"/></symbol>
<symbol id="t-out" viewBox="0 0 24 24"><rect x="9" y="4" width="13" height="16" fill="#3ca0e8"/><rect x="2" y="6" width="12" height="12" fill="#0c64b4"/><circle cx="8" cy="12" r="3" fill="none" stroke="#fff" stroke-width="1.600"/></symbol>
<symbol id="t-wx" viewBox="0 0 24 24"><ellipse cx="9" cy="10" rx="8" ry="7" fill="#3cc850"/><path d="M5 15l-1 4 5-2z" fill="#3cc850"/><ellipse cx="16" cy="16" rx="7" ry="6" fill="#f0f0f0"/><circle cx="7" cy="8" r="1" fill="#103020"/><circle cx="12" cy="8" r="1" fill="#103020"/></symbol>
<symbol id="t-cloud" viewBox="0 0 24 24"><circle cx="9" cy="13" r="7" fill="#f4d040"/><circle cx="15" cy="9" r="6" fill="#58b8e8"/><path d="M6 18c4 4 12 4 16 0-1-6-13-6-16 0z" fill="#3c90e0"/></symbol>
<symbol id="t-bear" viewBox="0 0 24 24"><circle cx="5" cy="6" r="3.500" fill="#20b070"/><circle cx="19" cy="6" r="3.500" fill="#20b070"/><circle cx="12" cy="13" r="10" fill="#20b070"/><rect x="9" y="9" width="6" height="9" rx="3" fill="#fff"/><circle cx="12" cy="14" r="1.600" fill="#107040"/></symbol>
<symbol id="t-bat" viewBox="0 0 24 24"><rect x="6" y="8" width="17" height="9" fill="#c8d0dc" stroke="#fff"/><path d="M1 4l5 6M4 2l4 6" stroke="#fff"/></symbol>
<symbol id="t-net" viewBox="0 0 24 24" fill="none" stroke="#fff"><rect x="6" y="4" width="17" height="13"/><path d="M13 17v4M9 21h9"/><rect x="1" y="2" width="6" height="8" fill="#0c2a45"/></symbol>
<symbol id="t-vol" viewBox="0 0 24 24" fill="none" stroke="#d0d8e0"><path d="M3 9h4l5-5v16l-5-5H3z"/><path d="M15 9c1 2 1 4 0 6M18 7c2 3 2 7 0 10" opacity=".8"/></symbol>
<symbol id="t-s" viewBox="0 0 24 24"><path d="M3 4l18-3 2 18-19 4z" fill="#e8442c"/><path d="M17 7H9v4h7v5H7" fill="none" stroke="#fff" stroke-width="2.400"/></symbol>
<symbol id="t-note" viewBox="0 0 24 24"><path d="M3 3h18v15h-7l-3 3-3-3H3z" fill="none" stroke="#fff" stroke-width="1.200"/></symbol>
</defs>
</svg>

<div class="app">
  <header class="titlebar">
    <svg class="title-icon"><use href="#i-catia"/></svg>
    <span class="title-text">正在运行锐锋快速建模工具！锐锋快捷设计中心 BY_安徽锐锋科技【工厂仿真组】叶朝成 - [0-NW26-W281L-C49-U01-11.igs]</span>
    <div class="winbtns">
      <span class="wb wb-min"></span>
      <span class="wb wb-max"></span>
      <svg class="wb-x" viewBox="0 0 12 12"><path d="M0 0l12 12M12 0L0 12" stroke="#777" fill="none"/></svg>
    </div>
  </header>

  <nav class="menubar">
    <svg class="menu-logo"><use href="#i-catia"/></svg>
    <div class="menu">
      <span class="menu-item active"><u>S</u>tart</span>
      <span class="menu-item"><u>F</u>ile</span>
      <span class="menu-item"><u>E</u>dit</span>
      <span class="menu-item"><u>V</u>iew</span>
      <span class="menu-item"><u>I</u>nsert</span>
      <span class="menu-item"><u>T</u>ools</span>
      <span class="menu-item"><u>W</u>indow</span>
      <span class="menu-item"><u>H</u>elp</span>
    </div>
    <div class="mdi">
      <span class="mdi-btn">&#8211;</span>
      <span class="mdi-btn"><svg class="mdi-r" viewBox="0 0 10 10"><path d="M3 3V1h6v5H7M1 3h6v6H1z" fill="none" stroke="#667"/></svg></span>
      <span class="mdi-btn mdi-x">&#10005;</span>
    </div>
  </nav>

  <section class="toolbar top">
    <span class="grip grip-first"></span>
    <div class="combos">
      <div class="combo w-a">Automa</div>
      <div class="combo w-b grey">Auto</div>
      <div class="combo w-c">Auto</div>
      <div class="combo w-c2">Auto</div>
      <div class="combo w-d">Aut</div>
      <div class="combo w-d dis">Aut</div>
      <div class="combo w-e">None</div>
    </div>
    <div class="icons top-a">
      <span class="ic"><svg><use href="#i-brush"/></svg></span>
      <span class="ic"><svg><use href="#i-ball"/></svg></span>
      <span class="ic"><span class="grip"></span></span>
      <span class="ic dd"><svg><use href="#i-sk1"/></svg></span>
      <span class="ic dd"><svg><use href="#i-sk2"/></svg></span>
      <span class="ic"><span class="grip"></span></span>
      <span class="ic"><svg><use href="#i-gearg"/></svg></span>
      <span class="ic dd"><svg><use href="#i-face"/></svg></span>
      <span class="ic"><svg><use href="#i-tabled"/></svg></span>
      <span class="ic"><span class="grip"></span></span>
      <span class="ic"><svg><use href="#i-swirl"/></svg></span>
      <span class="ic"><svg><use href="#i-hand"/></svg></span>
      <span class="ic"><svg><use href="#i-axis"/></svg></span>
      <span class="ic"><svg><use href="#i-num"/></svg></span>
      <span class="ic dd"><svg><use href="#i-cube"/></svg></span>
      <span class="ic"><svg><use href="#i-skr"/></svg></span>
      <span class="ic dd"><svg><use href="#i-list"/></svg></span>
      <span class="ic"><svg><use href="#i-plane"/></svg></span>
    </div>
    <div class="combo w-geo grey">Geometrical Set.1</div>
    <span class="grip grip-geo"></span>
    <div class="icons top-b">
      <span class="ic dd"><svg><use href="#i-grid4"/></svg></span>
      <span class="ic dd"><svg><use href="#i-surf1"/></svg></span>
      <span class="ic dd"><svg><use href="#i-arc"/></svg></span>
      <span class="ic dd"><svg><use href="#i-cres"/></svg></span>
      <span class="ic dd"><svg><use href="#i-proj"/></svg></span>
      <span class="ic"><svg><use href="#i-surf2"/></svg></span>
    </div>
  </section>

  <main class="middle">
    <div class="canvas"></div>
    <aside class="rightbar">
      <div class="rcol col1">
        <span class="ic"><span class="rsep"></span></span>
        <span class="ic dd"><svg><use href="#i-d1"/></svg></span>
        <span class="ic"><span class="rsep long"></span></span>
        <span class="ic"><svg><use href="#i-d2"/></svg></span>
        <span class="ic dd"><svg><use href="#i-d3"/></svg></span>
        <span class="ic"><span class="rsep long"></span></span>
        <span class="ic dd"><svg><use href="#i-d4"/></svg></span>
        <span class="ic"><span class="rsep"></span></span>
        <span class="ic dd"><svg><use href="#i-sketch"/></svg></span>
        <span class="ic"><span class="rsep"></span></span>
        <span class="ic dd"><svg><use href="#i-pad"/></svg></span>
        <span class="ic dd"><svg><use href="#i-d5"/></svg></span>
        <span class="ic"><svg><use href="#i-coil"/></svg></span>
        <span class="ic"><svg><use href="#i-d6"/></svg></span>
        <span class="ic"><svg><use href="#i-d7"/></svg></span>
        <span class="ic"><svg><use href="#i-rib"/></svg></span>
        <span class="ic"><svg><use href="#i-d8"/></svg></span>
        <span class="ic dd"><svg><use href="#i-hexc"/></svg></span>
        <span class="ic"><svg><use href="#i-rem"/></svg></span>
        <span class="ic"><svg><use href="#i-d9"/></svg></span>
        <span class="ic"><span class="rsep"></span></span>
        <span class="ic"><svg><use href="#i-dot"/></svg></span>
        <span class="ic"><svg><use href="#i-line"/></svg></span>
        <span class="ic"><svg><use href="#i-para"/></svg></span>
        <span class="ic"><span class="rsep"></span></span>
        <span class="ic"><svg><use href="#i-ruler"/></svg></span>
        <span class="ic"><svg><use href="#i-cal"/></svg></span>
        <span class="ic"><svg><use href="#i-weight"/></svg></span>
      </div>
      <div class="rcol col2">
        <span class="ic"><span class="rsep"></span></span>
        <span class="ic dd"><svg><use href="#i-abc"/></svg></span>
        <span class="ic dd"><svg><use href="#i-flag"/></svg></span>
        <span class="ic"><svg><use href="#i-stamp"/></svg></span>
        <span class="ic"><span class="rsep"></span></span>
        <span class="ic"><svg><use href="#i-tgear"/></svg></span>
        <span class="ic"><span class="rsep"></span></span>
        <span class="ic"><svg><use href="#i-boxr"/></svg></span>
        <span class="ic"><svg><use href="#i-fem"/></svg></span>
        <span class="ic"><svg><use href="#i-target"/></svg></span>
        <span class="ic"><svg><use href="#i-stack"/></svg></span>
        <span class="ic"><span class="rsep"></span></span>
        <span class="ic"><svg><use href="#i-d10"/></svg></span>
        <span class="ic"><svg><use href="#i-dim"/></svg></span>
        <span class="ic"><span class="rsep"></span></span>
        <span class="ic dd"><svg><use href="#i-layers"/></svg></span>
        <span class="ic"><span class="rsep"></span></span>
        <span class="ic dd"><svg><use href="#i-d11"/></svg></span>
        <span class="ic"><svg><use href="#i-d12"/></svg></span>
        <span class="ic dd"><svg><use href="#i-d13"/></svg></span>
        <span class="ic"><svg><use href="#i-d14"/></svg></span>
        <span class="ic"><svg><use href="#i-d15"/></svg></span>
        <span class="ic"><svg><use href="#i-d16"/></svg></span>
        <span class="ic dd"><svg><use href="#i-d17"/></svg></span>
        <span class="ic"><span class="rsep"></span></span>
        <span class="ic"><svg><use href="#i-rev"/></svg></span>
      </div>
    </aside>
  </main>

  <section class="toolbar bottom">
    <span class="grip grip-first"></span>
    <div class="icons bot-a">
      <span class="ic"><svg><use href="#i-new"/></svg></span>
      <span class="ic"><svg><use href="#i-open"/></svg></span>
      <span class="ic"><svg><use href="#i-save"/></svg></span>
      <span class="ic"><svg><use href="#i-print"/></svg></span>
      <span class="ic"><svg><use href="#i-cut"/></svg></span>
      <span class="ic"><svg><use href="#i-copy"/></svg></span>
      <span class="ic"><svg><use href="#i-paste"/></svg></span>
      <span class="ic dd"><svg><use href="#i-undo"/></svg></span>
      <span class="ic dd"><svg><use href="#i-redo"/></svg></span>
      <span class="ic"><svg><use href="#i-help"/></svg></span>
      <span class="ic"><span class="grip"></span></span>
      <span class="ic"><svg><use href="#i-fx"/></svg></span>
      <span class="ic"><svg><use href="#i-chat"/></svg></span>
      <span class="ic"><svg><use href="#i-link"/></svg></span>
      <span class="ic dd"><svg><use href="#i-table"/></svg></span>
      <span class="ic"><svg><use href="#i-tree"/></svg></span>
      <span class="ic dd"><svg><use href="#i-lock"/></svg></span>
      <span class="ic"><svg><use href="#i-par"/></svg></span>
      <span class="ic"><span class="grip"></span></span>
      <span class="ic"><svg><use href="#i-gears"/></svg></span>
      <span class="ic"><svg><use href="#i-gear"/></svg></span>
      <span class="ic"><svg><use href="#i-tap"/></svg></span>
      <span class="ic"><svg><use href="#i-book"/></svg></span>
      <span class="ic"><svg><use href="#i-stet"/></svg></span>
      <span class="ic"><svg><use href="#i-wb"/></svg></span>
    </div>
    <div class="icons bot-b">
      <span class="ic"><span class="grip"></span></span>
      <span class="ic"><svg><use href="#i-air"/></svg></span>
      <span class="ic"><svg><use href="#i-fit"/></svg></span>
      <span class="ic"><svg><use href="#i-pan"/></svg></span>
      <span class="ic"><svg><use href="#i-rot"/></svg></span>
      <span class="ic"><svg><use href="#i-zin"/></svg></span>
      <span class="ic"><svg><use href="#i-zout"/></svg></span>
      <span class="ic"><svg><use href="#i-normal"/></svg></span>
      <span class="ic"><svg><use href="#i-views"/></svg></span>
      <span class="ic dd"><svg><use href="#i-box"/></svg></span>
      <span class="ic dd boxed"><svg><use href="#i-cyl"/></svg></span>
      <span class="ic"><svg><use href="#i-shot1"/></svg></span>
      <span class="ic"><svg><use href="#i-shot2"/></svg></span>
      <span class="ic"><span class="grip"></span></span>
      <span class="ic"><svg><use href="#i-ctl"/></svg></span>
    </div>
    <svg class="catia-logo" viewBox="0 0 44 36">
      <path d="M10 3L20 2l-5 6c6 0 5 6-3 8" fill="none" stroke="#c8202c" stroke-width="1.300"/>
      <path d="M9 10L3 25c11 0 15-12 6-15" fill="none" stroke="#2030a0" stroke-width="1.700"/>
      <path d="M26 8c-8 0-9 6-4 8 4 2 2 8-5 8" fill="none" stroke="#e8c020" stroke-width="1.700"/>
      <text x="40" y="33" class="logoC" fill="#2a50b0">CATIA</text>
    </svg>
  </section>

  <footer class="statusbar">
    <span class="status-text">Loading data in document Part308.CATPart</span>
    <div class="status-input"></div>
    <span class="status-btn first"><svg viewBox="0 0 16 16"><path d="M3 3h10v10H3z" fill="none" stroke="#a8a8b8"/><path d="M5 5h5v5H5zM3 13h10" fill="#e8e8f0" stroke="#a8a8b8"/></svg></span>
    <span class="status-btn"><svg viewBox="0 0 18 18"><circle cx="9" cy="8" r="7" fill="#fff" stroke="#222"/><text x="9" y="12" class="infot" fill="#222">i</text><path d="M4 15h12" stroke="#222" stroke-width="2"/></svg></span>
  </footer>

  <div class="taskbar">
    <span class="tb-ic"><svg><use href="#t-win"/></svg></span>
    <span class="tb-ic"><svg><use href="#t-edge"/></svg></span>
    <span class="task"><svg><use href="#t-folderd"/></svg>下载</span>
    <span class="task"><svg><use href="#t-folder"/></svg>20210831</span>
    <span class="task active"><svg><use href="#i-catia"/></svg>正在运行锐锋...</span>
    <span class="task"><svg><use href="#t-help"/></svg>CAA V5 Visua...</span>
    <span class="task"><svg><use href="#t-sticky"/></svg>Sticky Notes</span>
    <span class="task"><svg><use href="#t-ding"/></svg>钉钉</span>
    <span class="task"><svg><use href="#t-cam"/></svg>正在录制...</span>
    <span class="task"><svg><use href="#t-rf"/></svg>锐锋科技CATI...</span>
    <span class="tb-ic"><svg><use href="#t-sun"/></svg></span>
    <span class="temp">33°C</span>
    <span class="tb-ic small"><svg><use href="#t-chev"/></svg></span>
    <span class="tb-ic small"><svg><use href="#t-mic"/></svg></span>
    <span class="tb-ic small"><svg><use href="#t-ding"/></svg></span>
    <span class="tb-ic small"><svg><use href="#t-qq"/></svg></span>
    <span class="tb-ic small"><svg><use href="#t-out"/></svg></span>
    <span class="tb-ic small"><svg><use href="#t-wx"/></svg></span>
    <span class="tb-ic small"><svg><use href="#t-cloud"/></svg></span>
    <span class="tb-ic small"><svg><use href="#t-bear"/></svg></span>
    <span class="tb-ic small"><svg><use href="#t-bat"/></svg></span>
    <span class="tb-ic small"><svg><use href="#t-net"/></svg></span>
    <span class="tb-ic small"><svg><use href="#t-vol"/></svg></span>
    <span class="ime">中</span>
    <span class="tb-ic small"><svg><use href="#t-s"/></svg></span>
    <span class="clock"><span>10:47</span><span>2021/8/31</span></span>
    <span class="tb-ic small"><svg><use href="#t-note"/></svg></span>
  </div>

  <div class="spinner"></div>

  <div class="dialog">
    <div class="dlg-title"><span>Converting Data...</span><svg class="dlg-x" viewBox="0 0 12 12"><path d="M0 0l12 12M12 0L0 12" stroke="#666" fill="none"/></svg></div>
    <div class="dlg-body">
      <svg class="dlg-icon"><use href="#i-conv"/></svg>
      <div class="progress"></div>
      <div class="dlg-row"><span class="dlg-label">Status :</span><span>0% completed</span></div>
      <div class="dlg-row">Estimated time remaining :0sec</div>
      <div class="dlg-actions"><button class="cancel"><span>Cancel</span></button></div>
    </div>
    <div class="dlg-globe"></div>
  </div>
</div>
</body>
</html>
```

FILE: styles.css
```css
* { box-sizing: border-box; }
html, body { margin: 0; padding: 0; }
body { font-family: "Noto Sans", "Noto Sans CJK SC", sans-serif; background: #d0d0ea; }
.sprite { position: absolute; width: 0; height: 0; overflow: hidden; }

.app { position: relative; width: 1728px; height: 1080px; overflow: hidden; display: flex; flex-direction: column; }

/* title bar */
.titlebar { height: 24px; background: #fff; display: flex; align-items: center; flex: none; }
.title-icon { width: 14px; height: 14px; margin-left: 2px; border: 1px solid #111; }
.title-text { margin-left: 5px; font-size: 12.45px; color: #7c7c7c; white-space: nowrap; }
.winbtns { margin-left: auto; display: grid; grid-template-columns: 24px 66px 30px; align-items: center; justify-items: center; margin-right: 10px; }
.wb-min { width: 11px; height: 1px; background: #aaa; }
.wb-max { width: 10px; height: 10px; border: 1px solid #999; box-shadow: 2px -2px 0 -1px #fff, 2px -2px 0 0 #999; }
.wb-x { width: 12px; height: 12px; }

/* menu bar */
.menubar { height: 19px; background: #cfcfe8; display: flex; align-items: stretch; flex: none; position: relative; }
.menu-logo { width: 20px; height: 16px; flex: none; margin-right: 1px; }
.menu { display: grid; grid-template-columns: 59px 44px 46px 52px 57px 57px 72px auto; align-items: center; font-size: 12.8px; color: #222; }
.menu-item { height: 19px; line-height: 19px; }
.menu-item.active { width: 51px; background: #fbe3cc; padding-left: 7px; }
.mdi { margin-left: auto; display: flex; }
.mdi-btn { width: 19px; height: 19px; margin-left: 1px; background: #dcdcec; display: flex; align-items: center; justify-content: center; color: #667; font-size: 11px; font-weight: 700; }
.mdi-x { font-size: 10px; }
.mdi-r { width: 10px; height: 10px; }

/* toolbars */
.toolbar { flex: none; display: flex; align-items: center; }
.toolbar.top { height: 37px; padding-top: 2px; background: linear-gradient(#fff 0, #ecECf6 4px, #d2d2ea 9px, #cdcde6 31px, #a8a8bc 35px, #6f6f80 36px, #6f6f80 37px); }
.toolbar.bottom { height: 40px; background: linear-gradient(#cfcfe8 0, #fff 3px, #fff 5px, #d4d4ea 10px, #cdcde6 34px, #a8a8bc 38px, #6f6f80 40px); padding-top: 3px; }
.grip { display: block; width: 3px; height: 20px; margin: 0 auto; background: #ececf6; border-right: 1px solid #a8a8b8; }
.grip-first { margin: 0 0 0 7px; flex: none; }
.combos { display: flex; gap: 3px; margin-left: 9px; flex: none; }
.combo { position: relative; height: 27px; line-height: 25px; background: #fff; font-size: 12.5px; color: #333; padding-left: 4px; border: 1px solid #d0d0e2; flex: none; white-space: nowrap; overflow: hidden; }
.combo::after { content: ""; position: absolute; right: 6px; top: 9px; width: 6px; height: 6px; border-right: 1px solid #666; border-bottom: 1px solid #666; transform: rotate(45deg); }
.combo.grey { background: #dedee6; }
.combo.dis { color: #aaa; background: #f0f0f4; }
.combo.dis::after { border-color: #bbb; }
.w-a { width: 68px; }
.w-a::before { content: ""; position: absolute; right: 0; top: 0; width: 20px; height: 100%; background: #fff; }
.w-b { width: 70px; }
.w-c { width: 68px; }
.w-c2 { width: 69px; }
.w-d { width: 44px; }
.w-e { width: 69px; }
.w-geo { width: 178px; margin-left: 4px; background: #d4d4e4; padding-left: 2px; }
.grip-geo { margin: 0 0 0 10px; flex: none; }

.icons { display: grid; flex: none; align-items: center; }
.top-a { margin-left: 2px; grid-template-columns: 29px 39px 22px 30px 31px 21px 28px 30px 25px 22px 31px 27px 26px 31px 30px 27px 31px 24px; }
.top-b { margin-left: 8px; grid-template-columns: 31px 31px 31px 29px 30px 24px; }
.bot-a { margin-left: 8px; grid-template-columns: 28px 28px 28px 27px 30px 28px 29px 30px 31px 25px 22px 29px 24px 26px 30px 30px 30px 24px 22px 31px 32px 30px 31px 29px 24px; }
.bot-b { margin-left: 247px; grid-template-columns: 21px 29px 27px 29px 29px 28px 29px 28px 28px 31px 30px 29px 24px 23px 24px; }
.ic { position: relative; display: block; width: 24px; height: 24px; }
.ic > svg { display: block; width: 24px; height: 24px; }
.ic > .grip { margin-top: 2px; }
.dd::after { content: ""; position: absolute; left: 21px; top: 24px; border: 4px solid transparent; border-top: 4px solid #111; border-bottom: 0; }
.boxed::before { content: ""; position: absolute; left: 19px; top: 23px; width: 14px; height: 6px; background: #fff; }
.toolbar .ic.dd::after { top: 23px; }
.catia-logo { width: 44px; height: 36px; margin-left: auto; margin-right: 3px; flex: none; }

.numt { font: 700 10.5px "Liberation Sans", sans-serif; text-anchor: middle; letter-spacing: -.5px; }
.helpt { font: 700 22px "Liberation Sans", sans-serif; }
.fxt { font: italic 700 20px "Liberation Serif", serif; }
.fxs { font: 700 10px "Liberation Sans", sans-serif; letter-spacing: -.5px; }
.part { font: 700 13px "Liberation Sans", sans-serif; }
.abct { font: 700 8.5px "Liberation Sans", sans-serif; }
.qmark { font: 700 21px "Liberation Sans", sans-serif; }
.rft { font: 700 11px "Liberation Sans", sans-serif; text-anchor: middle; }
.infot { font: 700 11px "Liberation Serif", serif; text-anchor: middle; }
.logoC { font: italic 700 10.5px "Liberation Sans", sans-serif; text-anchor: end; }

/* middle */
.middle { flex: 1; display: flex; min-height: 0; }
.canvas { flex: 1; background: #cfcfe9; border-left: 2px solid #9a9aae; }
.rightbar { width: 78px; flex: none; display: flex; background: linear-gradient(90deg, #f4f4fb 0, #fff 4px, #e2e2f2 8px, #d0d0e8 12px, #cfcfe8 72px, #b8b8cc 78px); }
.rcol { display: grid; align-items: start; margin-top: -5px; align-self: flex-start; position: relative; z-index: 2; }
.col1 { margin-left: 8px; width: 24px; grid-template-rows: 23px 18px 17px 32px 18px 20px 25px 23px 24px 23px 32px 30px 26px 30px 30px 27px 28px 32px 30px 20px 22px 28px 30px 23px 22px 28px 29px 24px; }
.col2 { margin-left: 18px; width: 24px; grid-template-rows: 22px 30px 32px 22px 21px 56px 23px 27px 28px 28px 24px 24px 29px 21px 22px 26px 22px 30px 29px 31px 27px 28px 28px 44px 21px 24px; }
.rsep { display: block; width: 17px; height: 2px; margin: 11px 0 0 -3px; background: #ececf6; border-bottom: 1px solid #b4b4c6; }
.col2 .rsep { margin-left: -5px; }
.rsep.long { width: 33px; }
.rcol .dd::after { left: 20px; top: 24px; }

/* status */
.statusbar { height: 24px; flex: none; background: #d0d0e8; display: flex; align-items: center; padding-left: 4px; }
.status-text { font-size: 12.5px; color: #333; white-space: nowrap; }
.status-input { margin-left: auto; width: 303px; height: 22px; background: #fff; border: 1px solid #9a9aa8; border-bottom-color: #eee; }
.status-btn { width: 25px; height: 22px; margin-left: 1px; background: #dcdcec; display: flex; align-items: center; justify-content: center; }
.status-btn + .status-btn { width: 32px; margin-left: 9px; margin-right: 1px; }
.status-btn svg { width: 17px; height: 17px; }

/* taskbar */
.taskbar { height: 41px; flex: none; background: #0c2a45; display: grid; align-items: center; color: #eef3f7; font-size: 13px; padding-left: 11px;
  grid-template-columns: 52px 41px 133px 130px 139px 134px 134px 134px 134px 152px 31px 45px 25px 24px 24px 24px 24px 24px 25px 25px 24px 24px 24px 28px 35px 82px 24px; }
.tb-ic { display: block; width: 24px; height: 24px; margin-top: 2px; }
.tb-ic svg { display: block; width: 24px; height: 24px; }
.tb-ic.small svg { width: 20px; height: 20px; margin: 2px; }
.task { display: flex; align-items: center; gap: 4px; height: 41px; width: 125px; padding: 2px 0 0 8px; border-bottom: 2px solid #7dc4ea; white-space: nowrap; overflow: hidden; }
.task svg { width: 20px; height: 20px; flex: none; }
.task:nth-of-type(5) { width: 133px; padding-left: 12px; background: #10507f; }
.task:nth-of-type(4) { width: 125px; }
.task.active svg { border: 1px solid #fff; }
.temp { font-size: 16px; padding-top: 2px; }
.ime { font-size: 15px; text-align: center; width: 24px; padding-top: 2px; color: #fff; }
.clock { display: flex; flex-direction: column; align-items: center; width: 70px; font-size: 13.5px; line-height: 20px; padding-top: 1px; }

/* overlays */
.spinner { position: absolute; left: 651px; top: 726px; width: 20px; height: 20px; border-radius: 50%; border: 4px solid #3a90dc; background: #e8eefa; box-shadow: 0 0 2px #fff; }
.dialog { position: absolute; left: 1318px; top: 716px; width: 394px; height: 161px; box-shadow: 0 0 2px #777; color: #6a6a78; font-size: 12.5px; overflow: hidden; z-index: 1; }
.dlg-title { height: 30px; background: rgba(236, 236, 249, .8); display: flex; align-items: center; justify-content: space-between; padding: 0 10px 0 9px; font-size: 12.5px; }
.dlg-x { width: 12px; height: 12px; margin-right: 0; }
.dlg-body { height: 131px; background: rgba(241, 224, 207, .8); padding: 9px 25px 0 25px; position: relative; }
.dlg-icon { display: block; width: 21px; height: 21px; margin-left: 0; }
.progress { height: 13px; margin-top: 20px; width: 344px; background: #dcdcea; border: 1px solid #d4d4e4; border-top: 2px solid #9a9aa4; border-left: 2px solid #9a9aa4; }
.dlg-row { height: 17px; line-height: 17px; margin-top: 2px; white-space: nowrap; display: flex; }
.dlg-row + .dlg-row { margin-top: 0; }
.dlg-label { width: 153px; }
.dlg-actions { display: flex; justify-content: flex-start; padding: 1px 0 0 142px; }
.cancel { width: 61px; height: 22px; padding: 2px; font: 12.5px "Noto Sans", sans-serif; color: #6a6a88; background: #dcd8ea; border: 2px solid #8c8ca0; }
.cancel span { display: block; border: 1px dotted #7a7a98; line-height: 14px; }
.dlg-globe { position: absolute; left: 0; bottom: 0; width: 42px; height: 22px; background: radial-gradient(circle at 10px 26px, #5d7296 0, #8c9cbc 16px, rgba(240,190,130,.55) 20px, rgba(240,210,170,0) 36px); }
```
